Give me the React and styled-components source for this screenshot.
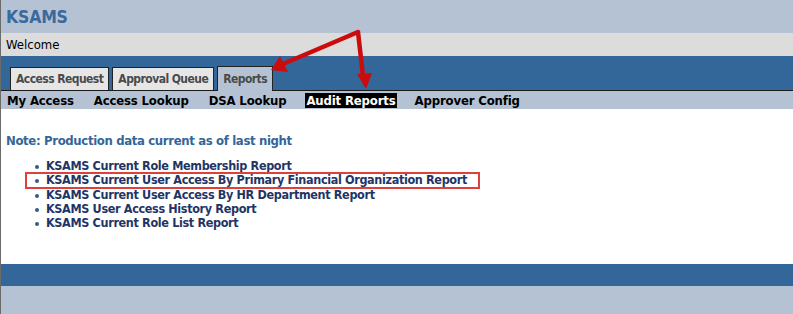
import React from "react"
import styled, { createGlobalStyle } from "styled-components"

const GlobalStyle = createGlobalStyle`
  html, body {
    margin: 0;
    padding: 0;
    background: #b5c2d4;
  }
  body {
    font-family: "DejaVu Sans Condensed", "DejaVu Sans", sans-serif;
  }
`

const Page = styled.div`
  position: relative;
  width: 793px;
  height: 314px;
  overflow: hidden;
  background: #b5c2d4;
  border-left: 1px solid #6b6b6b;
  box-sizing: border-box;
`

const Header = styled.div`
  height: 33px;
  display: flex;
  align-items: center;
  padding: 0 5px;
  background: #b5c2d4;

  & h1 {
    margin: 0;
    font-size: 17.5px;
    font-weight: 700;
    letter-spacing: -0.2px;
    color: #3a6a9c;
  }
`

const WelcomeBar = styled.div`
  height: 23px;
  display: flex;
  align-items: center;
  padding: 0 5px;
  background: #dcdcdc;
  font-size: 13px;
  color: #000;
`

const TabBand = styled.div`
  height: 34px;
  display: flex;
  align-items: flex-end;
  gap: 3px;
  padding: 0 9px;
  background: #336699;
  border-bottom: 1px solid #1a1a1a;
`

const Tab = styled.div`
  height: ${p => (p.$active ? "25px" : "23px")};
  display: flex;
  align-items: center;
  padding: 0 5px;
  box-sizing: border-box;
  border: 1px solid #222;
  border-bottom: none;
  background: ${p => (p.$active ? "#b5c2d4" : "#e6e6e6")};
  font-size: 12px;
  font-weight: 700;
  letter-spacing: -0.55px;
  color: #4a4a4a;
  margin-bottom: ${p => (p.$active ? "-1px" : "0")};
`

const SubNav = styled.div`
  height: 18px;
  display: flex;
  align-items: center;
  padding: 0 5px;
  background: #b5c2d4;
`

const SubItem = styled.span`
  margin-right: ${p => p.$gap}px;
  padding: 0 1px;
  font-size: 13px;
  font-weight: 700;
  line-height: 15px;
  letter-spacing: -0.15px;
  color: ${p => (p.$active ? "#fff" : "#000")};
  background: ${p => (p.$active ? "#000" : "transparent")};
`

const Content = styled.div`
  height: 155px;
  padding: 24px 5px 0;
  box-sizing: border-box;
  background: #fff;
`

const Note = styled.p`
  margin: 0 0 11px;
  font-size: 13px;
  font-weight: 700;
  letter-spacing: -0.35px;
  color: #336699;
`

const ReportList = styled.ul`
  margin: 0;
  padding: 0 0 0 40px;
  list-style: none;
`

const ReportItem = styled.li`
  position: relative;
  height: 14.3px;
  font-size: 12.5px;
  font-weight: 700;
  line-height: 14.3px;
  letter-spacing: -0.35px;
  color: #1f3566;
  white-space: nowrap;

  &::before {
    content: "";
    position: absolute;
    left: -11px;
    top: 6px;
    width: 4px;
    height: 4px;
    border-radius: 50%;
    background: #2f5c8f;
  }
`

const Highlight = styled.span`
  position: absolute;
  left: -21px;
  top: -1px;
  width: 455px;
  height: 17px;
  border: 2px solid #e0403c;
  box-sizing: border-box;
  pointer-events: none;
`

const FooterBand = styled.div`
  height: 22px;
  background: #336699;
`

const Arrows = styled.svg`
  position: absolute;
  left: 0;
  top: 0;
  pointer-events: none;
`

const reports = [
  "KSAMS Current Role Membership Report",
  "KSAMS Current User Access By Primary Financial Organization Report",
  "KSAMS Current User Access By HR Department Report",
  "KSAMS User Access History Report",
  "KSAMS Current Role List Report",
]

const subNav = [
  { label: "My Access", gap: 18 },
  { label: "Access Lookup", gap: 18 },
  { label: "DSA Lookup", gap: 18 },
  { label: "Audit Reports", gap: 17, active: true },
  { label: "Approver Config", gap: 0 },
]

const App = () => {
  return (
    <Page>
      <GlobalStyle />
      <Header>
        <h1>KSAMS</h1>
      </Header>
      <WelcomeBar>Welcome</WelcomeBar>
      <TabBand>
        <Tab>Access Request</Tab>
        <Tab>Approval Queue</Tab>
        <Tab $active>Reports</Tab>
      </TabBand>
      <SubNav>
        {subNav.map(s => (
          <SubItem key={s.label} $gap={s.gap} $active={s.active}>
            {s.label}
          </SubItem>
        ))}
      </SubNav>
      <Content>
        <Note>Note: Production data current as of last night</Note>
        <ReportList>
          {reports.map((r, i) => (
            <ReportItem key={r}>
              {i === 1 && <Highlight />}
              {r}
            </ReportItem>
          ))}
        </ReportList>
      </Content>
      <FooterBand />
      <Arrows width="793" height="314" viewBox="0 0 793 314">
        <polyline
          points="282,64 357,32 362,76"
          fill="none"
          stroke="#cc0c0c"
          strokeWidth="4.5"
          strokeLinejoin="round"
        />
        <path d="M270,70 L279,56 L287,72 Z" fill="#cc0c0c" />
        <path d="M356,74 L371,73 L365,89 Z" fill="#cc0c0c" />
      </Arrows>
    </Page>
  )
}

export default App
